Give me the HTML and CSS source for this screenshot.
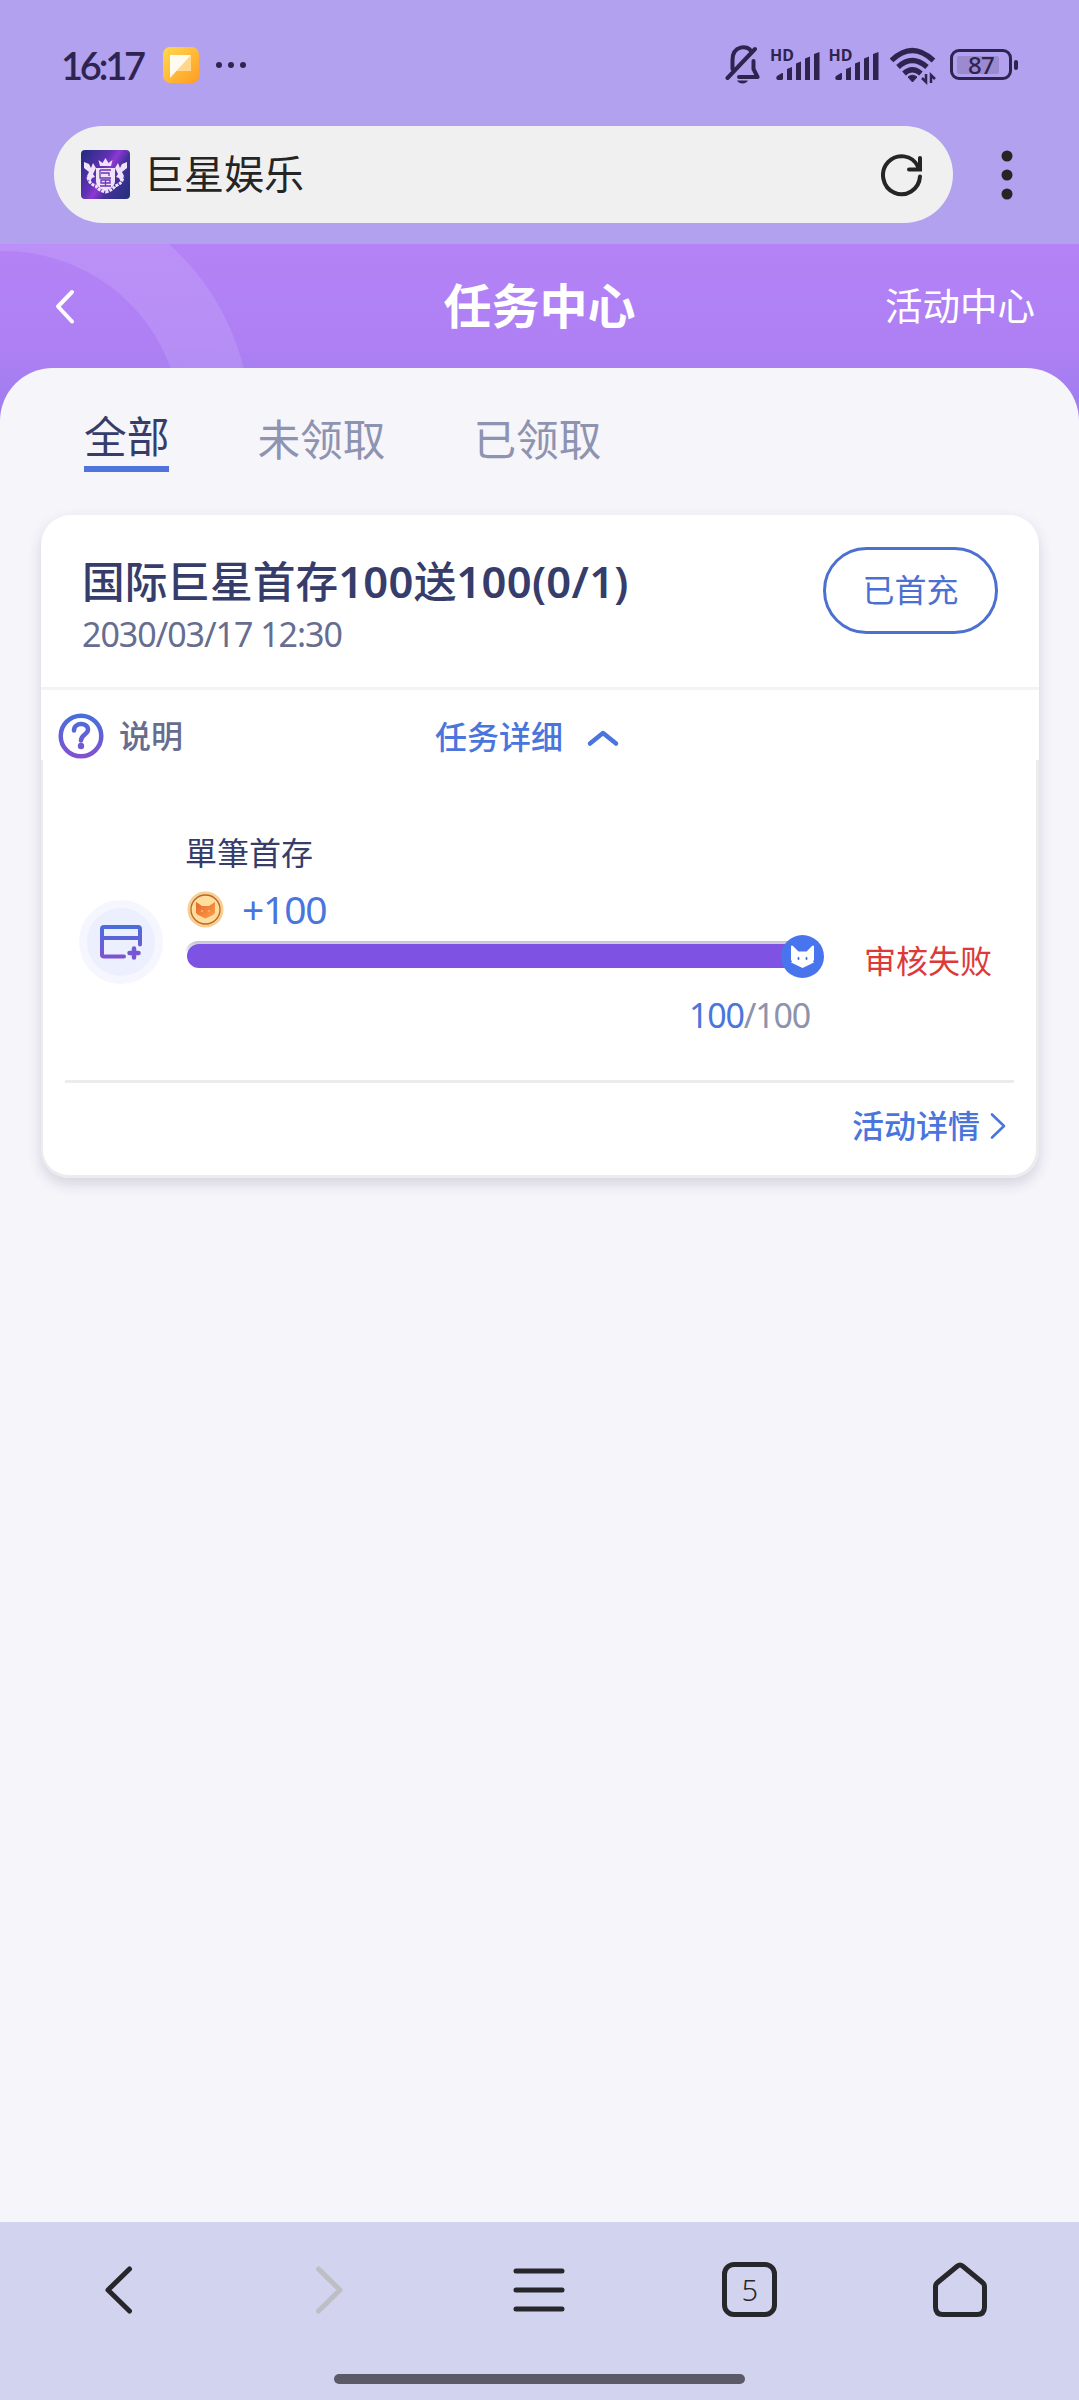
FILE: index.html
```html
<!DOCTYPE html>
<html lang="zh-CN">
<head>
<meta charset="utf-8">
<title>任务中心</title>
<link rel="stylesheet" href="styles.css">
</head>
<body>
<div class="screen">
  <div class="status-bar">
    <span class="clock">16:17</span>
    <svg class="app-badge" width="36" height="36" viewBox="0 0 36 36">
      <defs>
        <linearGradient id="badge" x1="0" y1="0" x2="1" y2="1"><stop offset="0" stop-color="#ffd94e"/><stop offset="1" stop-color="#ff9c24"/></linearGradient>
      </defs>
      <rect width="36" height="36" rx="7" fill="url(#badge)"/>
      <path d="M7 8h21v16H14z" fill="#ffd68a"/>
      <path d="M7 8h21L7 31z" fill="#fffaf0"/>
    </svg>
    <svg class="more-dots" width="32" height="8" viewBox="0 0 32 8" fill="#31244f"><circle cx="4" cy="4" r="3"/><circle cx="16" cy="4" r="3"/><circle cx="28" cy="4" r="3"/></svg>
    <svg class="bell" width="36" height="40" viewBox="0 0 36 40" fill="none" stroke="#2f2450" stroke-width="4" stroke-linecap="round" stroke-linejoin="round">
      <path d="M7.500 24V15C7.500 0 23 0 26 6M28.500 16v8l4 8H14M2.500 33 30 4"/>
      <path d="M12 35.500h11c-2 4-9 4-11 0z" fill="#2f2450" stroke="none"/>
    </svg>
    <span class="signal"><span class="hd">HD</span><svg width="50" height="32" viewBox="0 0 50 32" fill="#2f2450"><path d="M7 31c-2 0-2-3-1-4l5-3c1 0 1 0 1 1v5l-1 1zM16 20l5-2v13h-5zM25 14.500l5-2V31h-5zM34 9.500l5-2V31h-5zM43 5l5.500-2v28H43z"/></svg></span>
    <span class="signal"><span class="hd">HD</span><svg width="50" height="32" viewBox="0 0 50 32" fill="#2f2450"><path d="M7 31c-2 0-2-3-1-4l5-3c1 0 1 0 1 1v5l-1 1zM16 20l5-2v13h-5zM25 14.500l5-2V31h-5zM34 9.500l5-2V31h-5zM43 5l5.500-2v28H43z"/></svg></span>
    <svg class="wifi" width="46" height="38" viewBox="0 0 46 38" fill="none" stroke="#2f2450" stroke-width="5.200">
      <path d="M1.500 13.500Q22 -6.500 43.500 13.500M8 20Q22 7 37 20M14 26.500Q22 19 31 26.500"/>
      <path d="M18 30q4.500-3.500 9 0l-4.500 5z" fill="#2f2450" stroke-width="1"/>
      <path d="M36 27v8l-4-4M41 36v-8l4 4" stroke-width="2.500"/>
    </svg>
    <span class="battery"><span class="battery-level">87</span></span>
  </div>

  <div class="address-row">
    <div class="address">
      <svg class="site-logo" width="49" height="49" viewBox="0 0 49 49">
        <defs><linearGradient id="site" x1="0" y1=".2" x2="1" y2=".8"><stop offset="0" stop-color="#2c2c87"/><stop offset=".38" stop-color="#6132b4"/><stop offset=".5" stop-color="#8d39d2"/><stop offset=".68" stop-color="#46309d"/><stop offset="1" stop-color="#28307f"/></linearGradient></defs>
        <rect width="49" height="49" rx="4" fill="url(#site)"/>
        <path d="M19 16l-1.500-6 4 3 3-5 3 5 4-3-1.500 6zM15 18h19v14q-1 6-9.500 9Q16 38 15 32z" fill="#efe2fa"/>
        <path d="M3 12l5 2 2 4 2-5 3 5-3 6 2 3-3 1-2 4-3-6 2-4-5-4zM46 12l-5 2-2 4-2-5-3 5 3 6-2 3 3 1 2 4 3-6-2-4 5-4z" fill="#efe2fa"/>
        <path d="M7 27q1 7 8 9 2 4 9.500 6 7.500-2 9.500-6 7-2 8-9" fill="none" stroke="#efe2fa" stroke-width="3" stroke-dasharray="3 1"/>
        <path d="M19 20h11M19 20v8h11M20 23h8v3M20 30h9v3h-9zM19 36h11M24.500 30v6" fill="none" stroke="#6a35b8" stroke-width="1.300"/>
      </svg>
      <span class="site-title">巨星娱乐</span>
      <svg class="reload" width="42" height="44" viewBox="0 0 42 44" fill="none" stroke="#252525" stroke-width="4" stroke-linecap="round"><path d="M39 23.500A18.500 19 0 1 1 37 13.500L39 16.500M39 5v11.500H28"/></svg>
    </div>
    <svg class="kebab" width="12" height="50" viewBox="0 0 12 50" fill="#252525"><circle cx="6" cy="6" r="5.500"/><circle cx="6" cy="25" r="5.500"/><circle cx="6" cy="44" r="5.500"/></svg>
  </div>

  <div class="page">
    <svg class="ring" width="260" height="190" viewBox="0 0 260 190" fill="none"><defs><linearGradient id="ringfade" x1="0" y1="0" x2=".4" y2="1"><stop offset="0" stop-color="#fff" stop-opacity=".09"/><stop offset="1" stop-color="#cfc4ff" stop-opacity=".2"/></linearGradient></defs><circle cx="4" cy="184" r="212" stroke="url(#ringfade)" stroke-width="70"/></svg>
    <header class="page-header">
      <svg class="back" width="24" height="38" viewBox="0 0 24 38" fill="none" stroke="#fff" stroke-width="4" stroke-linecap="round" stroke-linejoin="round"><path d="M18 4 4 18.500 18 33.500"/></svg>
      <h1 class="page-title">任务中心</h1>
      <span class="header-link">活动中心</span>
    </header>

    <main class="sheet">
      <nav class="tabs">
        <span class="tab tab-active">全部</span>
        <span class="tab">未领取</span>
        <span class="tab">已领取</span>
      </nav>

      <section class="card">
        <div class="card-top">
          <div class="card-head">
            <div class="card-titles">
              <h2 class="card-title">国际巨星首存<b>100</b>送<b>100(0/1)</b></h2>
              <div class="card-date">2030/03/17 12:30</div>
            </div>
            <span class="pill">已首充</span>
          </div>
          <div class="card-tools">
            <svg class="help" width="46" height="46" viewBox="0 0 46 46" fill="none">
              <defs><linearGradient id="ink" gradientUnits="userSpaceOnUse" x1="0" y1="0" x2="0" y2="46"><stop offset="0" stop-color="#4570dc"/><stop offset="1" stop-color="#8350d0"/></linearGradient></defs>
              <circle cx="23" cy="23" r="20.300" stroke="url(#ink)" stroke-width="4.500"/>
              <path d="M16 17.500C16 9 30 9 30 16.500C30 21.500 23 21.500 23 27.500" stroke="url(#ink)" stroke-width="4.500" stroke-linecap="round"/>
              <circle cx="23" cy="33" r="3.200" fill="url(#ink)"/>
            </svg>
            <span class="help-label">说明</span>
            <span class="detail-toggle">任务详细</span>
            <svg class="caret" width="34" height="18" viewBox="0 0 34 18" fill="none" stroke="#4a75dc" stroke-width="4.500" stroke-linecap="round" stroke-linejoin="round"><path d="M4 14.500 17 4l13 10.500"/></svg>
          </div>
        </div>

        <div class="card-body">
          <div class="task">
            <div class="task-icon">
              <svg width="46" height="38" viewBox="0 0 46 38" fill="none" stroke="url(#card-ink)" stroke-width="4" stroke-linecap="round" stroke-linejoin="round">
                <defs><linearGradient id="card-ink" gradientUnits="userSpaceOnUse" x1="0" y1="0" x2="0" y2="38"><stop offset="0" stop-color="#4570dc"/><stop offset="1" stop-color="#8350d0"/></linearGradient></defs>
                <path d="M26 33.500H6Q4 33.500 4 31.500V6Q4 4 6 4H40Q42 4 42 6V21.500M5 15H42"/><path d="M36 25.500v9M31.500 30h9" stroke-width="4.500"/>
              </svg>
            </div>
            <div class="task-main">
              <div class="task-name">單筆首存</div>
              <div class="reward">
                <svg width="37" height="37" viewBox="0 0 37 37">
                  <defs><linearGradient id="fox" x1="0" y1="0" x2="1" y2="1"><stop offset="0" stop-color="#e5662b"/><stop offset="1" stop-color="#ffa048"/></linearGradient></defs>
                  <circle cx="18.500" cy="18.500" r="18" fill="#f8cf91"/><circle cx="18.500" cy="18.500" r="14.500" fill="#ffdd9d" stroke="#b9672a" stroke-width="1.300"/>
                  <path d="M9 11l6 4h7l6-4v11l-2 2-7.500 3.500L11 24l-2-2z" fill="url(#fox)"/><circle cx="15" cy="20" r=".8" fill="#ffe2b0"/><circle cx="22" cy="20" r=".8" fill="#ffe2b0"/>
                </svg>
                <span class="reward-value">+100</span>
              </div>
              <div class="progress">
                <div class="progress-fill"></div>
                <svg class="knob" width="43" height="43" viewBox="0 0 43 43"><circle cx="21.500" cy="21.500" r="21.500" fill="#4874ee"/><path d="M10 11q1-1 2 0l5.500 5.500h8L31 11q1-1 2 0v14l-1 1.500 1 1-11.500 5.500L10 27.500l1-1-1-1.500z" fill="#fff"/><ellipse cx="17.500" cy="23.500" rx="1" ry="1.700" fill="#4874ee"/><ellipse cx="25.500" cy="23.500" rx="1" ry="1.700" fill="#4874ee"/></svg>
              </div>
              <div class="count"><span class="count-now">100</span>/100</div>
            </div>
            <span class="task-state">审核失败</span>
          </div>
          <div class="card-foot">
            <span>活动详情</span>
            <svg width="18" height="28" viewBox="0 0 18 28" fill="none" stroke="#4a75dc" stroke-width="2.600" stroke-linecap="round" stroke-linejoin="round"><path d="M3 2.500 15 14 3 25.500"/></svg>
          </div>
        </div>
      </section>
    </main>
  </div>

  <footer class="browser-nav">
    <div class="nav-buttons">
      <svg width="60" height="60" viewBox="0 0 60 60" fill="none" stroke="#26262b" stroke-width="5" stroke-linecap="round" stroke-linejoin="round"><path d="M40.500 9 19 30l21.500 21"/></svg>
      <svg width="60" height="60" viewBox="0 0 60 60" fill="none" stroke="#bebec5" stroke-width="5" stroke-linecap="round" stroke-linejoin="round"><path d="M19.500 9 41 30 19.500 51"/></svg>
      <svg width="60" height="60" viewBox="0 0 60 60" fill="none" stroke="#26262b" stroke-width="5" stroke-linecap="round"><path d="M7 11h46M7 30h46M7 49h46"/></svg>
      <span class="tab-count">5</span>
      <svg width="60" height="60" viewBox="0 0 60 60" fill="none" stroke="#26262b" stroke-width="5" stroke-linejoin="round"><path d="M27.500 6Q30 4 32.500 6L52.500 22.500Q54.500 24 54.500 27V47Q54.500 54.500 47 54.500H13Q5.500 54.500 5.500 47V27Q5.500 24 7.500 22.500Z"/></svg>
    </div>
    <div class="home-bar"></div>
  </footer>
</div>
</body>
</html>
```
FILE: styles.css
```css
* { box-sizing: border-box; }

body {
  margin: 0;
  font-family: "Noto Sans CJK SC", sans-serif;
  background: #f5f5fa;
}

svg { display: block; flex: none; }
h1, h2 { margin: 0; }

.screen {
  width: 1079px;
  height: 2400px;
  display: flex;
  flex-direction: column;
}

.status-bar {
  height: 126px;
  padding: 3px 61px 0 61px;
  display: flex;
  align-items: center;
  background: #b1a1ee;
  color: #2f2450;
}

.clock {
  width: 102px;
  font: 600 38px/40px "Lato", sans-serif;
  letter-spacing: -3.2px;
}

.more-dots { margin-left: 16px; }
.bell { margin: 0 10px 0 auto; }

.signal {
  width: 58.5px;
  height: 32px;
  position: relative;
}

.hd {
  position: absolute;
  left: -1px;
  top: -3px;
  font: 700 16px/18px "Noto Sans", sans-serif;
}

.wifi { margin: 2px 14px 0 2px; }

.battery {
  width: 62px;
  height: 31px;
  padding: 4px 4px;
  border: 3px solid #2f2450;
  border-radius: 9px;
  position: relative;
  margin-right: 6px;
}
.battery::after {
  content: "";
  position: absolute;
  right: -9px;
  top: 8px;
  width: 4px;
  height: 10px;
  border-radius: 2px;
  background: #2f2450;
}
.battery-level {
  display: block;
  width: 42px;
  height: 18px;
  padding-left: 11px;
  background: #9c8ad0;
  border-radius: 2px;
  font: 500 24px/18px "Noto Sans", sans-serif;
  letter-spacing: -.8px;
}

.address-row {
  height: 118px;
  padding: 0 66px 21px 54px;
  display: flex;
  align-items: center;
  justify-content: space-between;
  background: #b1a1ee;
}
.address {
  width: 899px;
  height: 97px;
  padding: 0 30px 0 27px;
  display: flex;
  align-items: center;
  border-radius: 49px;
  background: #f0f0f0;
}
.site-title {
  margin-left: 14px;
  padding-bottom: 6px;
  font-size: 40px;
  line-height: 56px;
  color: #252525;
}
.reload { margin-left: auto; }

.page {
  flex: 1;
  display: flex;
  flex-direction: column;
  position: relative;
  background: linear-gradient(#b483f6 0, #ae80f4 100px, #a47ef0 145px, #a27af2 190px);
}
.ring {
  position: absolute;
  left: 0;
  top: 0;
}

.page-header {
  height: 124px;
  padding: 0 44px 0 44px;
  display: grid;
  grid-template-columns: 1fr auto 1fr;
  align-items: center;
  position: relative;
  color: #fff;
}
.back { margin: 2px 0 0 10px; }
.page-title {
  padding-bottom: 7px;
  font-size: 48px;
  line-height: 64px;
  font-weight: 700;
}
.header-link {
  justify-self: end;
  padding-bottom: 4px;
  font-size: 37.5px;
  line-height: 50px;
}

.sheet {
  flex: 1;
  padding-top: 36px;
  border-radius: 53px 53px 0 0;
  position: relative;
  background: #f5f5fa;
}

.tabs {
  height: 111px;
  padding-left: 84px;
  display: flex;
  gap: 88px;
  align-items: flex-start;
}
.tab {
  padding-top: 2px;
  font-size: 42.7px;
  line-height: 62px;
  font-weight: 400;
  color: #8d93b0;
}
.tab-active {
  height: 68px;
  padding-top: 0;
  border-bottom: 6px solid #4f74dc;
  line-height: 60px;
  color: #363d6b;
}

.card {
  width: 998px;
  margin-left: 41px;
  border-radius: 30px 30px 28px 28px;
  box-shadow: 0 6px 14px rgba(50, 40, 90, .16);
}
.card-top {
  height: 245px;
  border-radius: 30px 30px 0 0;
  background: #fff;
}
.card-head {
  height: 175px;
  padding: 31px 41px 0 41px;
  display: flex;
  justify-content: space-between;
  border-bottom: 3px solid #f3f3f5;
}
.card-title {
  font-size: 42.7px;
  line-height: 66px;
  font-weight: 500;
  color: #363d6b;
  white-space: nowrap;
}
.card-title b {
  font-family: "Noto Sans", sans-serif;
  font-size: 43.5px;
  font-weight: 600;
  letter-spacing: .3px;
}
.card-date {
  margin-top: -3px;
  font: 400 34px/46px "Noto Sans", sans-serif;
  letter-spacing: -1.05px;
  color: #676d90;
}
.pill {
  width: 175px;
  height: 87px;
  margin-top: 1px;
  border: 3px solid #4c70cf;
  border-radius: 44px;
  text-align: center;
  font-size: 32px;
  line-height: 77px;
  color: #4c70cf;
}

.card-tools {
  height: 70px;
  padding: 22px 0 0 17px;
  display: flex;
  align-items: center;
  font-size: 32px;
  line-height: 46px;
  font-weight: 500;
}
.help-label {
  width: 331px;
  padding: 0 0 5px 15px;
  color: #676d90;
}
.detail-toggle {
  padding-bottom: 2px;
  color: #4a75dc;
}
.caret { margin: 4px 0 0 23px; }

.card-body {
  height: 418px;
  padding: 66px 22px 0 22px;
  border: solid #ececef;
  border-width: 0 3px 3px 2px;
  border-radius: 0 0 28px 28px;
  background: #fff;
}
.task {
  height: 257px;
  padding-left: 14px;
  display: flex;
  border-bottom: 3px solid #ececef;
}
.task-icon {
  width: 84px;
  height: 84px;
  margin-top: 74px;
  flex: none;
  display: grid;
  place-items: center;
  border: 8px solid #f6f7fe;
  border-radius: 50%;
  background: #eceffd;
}
.task-main {
  width: 640px;
  flex: none;
  padding-left: 22px;
}
.task-name {
  margin-top: -3px;
  padding-bottom: 3px;
  font-size: 32px;
  line-height: 56px;
  color: #363d6b;
}
.reward {
  height: 54px;
  display: flex;
  align-items: center;
  padding-left: 2px;
}
.reward-value {
  margin-left: 18px;
  padding-bottom: 1px;
  font: 400 39px/50px "Noto Sans", sans-serif;
  letter-spacing: -1.2px;
  color: #4a75dc;
}
.progress {
  width: 618px;
  height: 27px;
  margin-top: 5px;
  padding: 3px 0 0 2px;
  border-radius: 13px;
  position: relative;
  background: linear-gradient(#c5c3d0 0, #dddce6 6px, #fff 12px);
}
.progress-fill {
  height: 24px;
  border-radius: 12px;
  background: #7e53e3;
}
.knob {
  position: absolute;
  right: -21px;
  top: -6px;
}
.count {
  margin: 24px -7px 0 0;
  text-align: right;
  font: 400 34px/46px "Noto Sans", sans-serif;
  letter-spacing: -1.2px;
  color: #8d93ab;
}
.count-now { color: #4a75dc; }
.task-state {
  margin: 110px 0 0 61px;
  font-size: 32px;
  line-height: 46px;
  white-space: nowrap;
  color: #dc3a38;
}
.card-foot {
  height: 82px;
  padding-right: 7px;
  display: flex;
  align-items: center;
  justify-content: flex-end;
  gap: 9px;
  font-size: 32px;
  font-weight: 500;
  color: #4a75dc;
}
.card-foot svg { margin-top: 4px; }

.browser-nav {
  height: 178px;
  background: #d2d3ee;
}
.nav-buttons {
  height: 152px;
  padding: 0 14px 17px 14px;
  display: grid;
  grid-template-columns: repeat(5, 1fr);
  align-items: center;
  justify-items: center;
}
.tab-count {
  width: 55px;
  height: 55px;
  border: 5px solid #26262b;
  border-radius: 12px;
  text-align: center;
  font: 300 29px/45px "Noto Sans", sans-serif;
  color: #26262b;
}
.home-bar {
  width: 411px;
  height: 10px;
  margin: 0 auto;
  border-radius: 5px;
  background: #5b5b67;
}
```
